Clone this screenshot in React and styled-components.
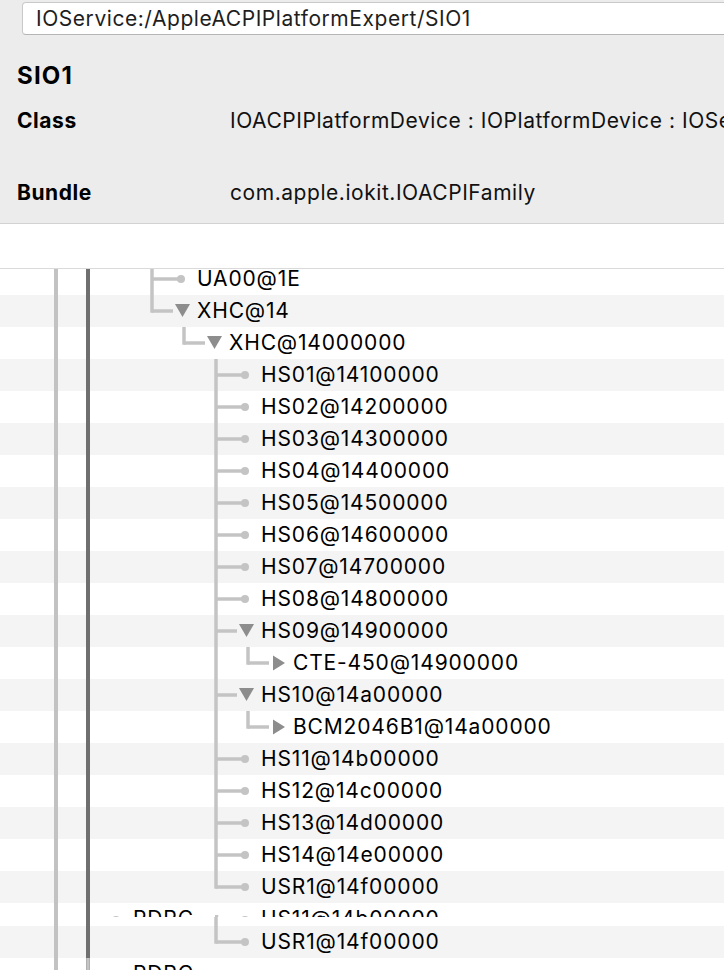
import React from "react";
import styled, { createGlobalStyle } from "styled-components";

const GlobalStyle = createGlobalStyle`
  html, body {
    margin: 0;
    padding: 0;
    background: #fff;
  }
  body {
    font-family: Inter, "Liberation Sans", sans-serif;
    color: #000;
  }
  #root {
    width: 724px;
    height: 970px;
    overflow: hidden;
  }
`;

const RAIL_LIGHT = "#c2c2c2";
const RAIL_DARK = "#6f6f6f";
const LINE = "#c4c4c4";
const ARROW = "#8d8d8d";
const ROW_H = 32;

const colX = (level) => 152 + level * 32;

const rows = [
  { name: "UA00@1E", level: 0, kind: "leaf" },
  { name: "XHC@14", level: 0, kind: "open", last: true },
  { name: "XHC@14000000", level: 1, kind: "open", last: true },
  { name: "HS01@14100000", level: 2, kind: "leaf" },
  { name: "HS02@14200000", level: 2, kind: "leaf" },
  { name: "HS03@14300000", level: 2, kind: "leaf" },
  { name: "HS04@14400000", level: 2, kind: "leaf" },
  { name: "HS05@14500000", level: 2, kind: "leaf" },
  { name: "HS06@14600000", level: 2, kind: "leaf" },
  { name: "HS07@14700000", level: 2, kind: "leaf" },
  { name: "HS08@14800000", level: 2, kind: "leaf" },
  { name: "HS09@14900000", level: 2, kind: "open" },
  { name: "CTE-450@14900000", level: 3, kind: "closed", last: true, through: [2] },
  { name: "HS10@14a00000", level: 2, kind: "open" },
  { name: "BCM2046B1@14a00000", level: 3, kind: "closed", last: true, through: [2] },
  { name: "HS11@14b00000", level: 2, kind: "leaf" },
  { name: "HS12@14c00000", level: 2, kind: "leaf" },
  { name: "HS13@14d00000", level: 2, kind: "leaf" },
  { name: "HS14@14e00000", level: 2, kind: "leaf" },
  { name: "USR1@14f00000", level: 2, kind: "leaf", last: true },
];

const Page = styled.div`
  width: 724px;
`;

const Inspector = styled.div`
  background: #ececec;
  height: 224px;
  box-sizing: border-box;
  border-bottom: 1px solid #d2d2d2;
  padding-top: 2px;
`;

const PathField = styled.div`
  margin-left: 22px;
  width: 740px;
  height: 33px;
  box-sizing: border-box;
  background: #fff;
  border: 1px solid #c9c9c9;
  border-bottom-color: #b5b5b5;
  border-radius: 4px;
  padding-left: 13px;
  font-size: 21px;
  letter-spacing: 0.55px;
  line-height: 31px;
  color: #1e1e1e;
  white-space: nowrap;
`;

const Title = styled.div`
  margin: 26px 0 0 17px;
  font-size: 24px;
  letter-spacing: 1.2px;
  font-weight: 700;
  line-height: 30px;
`;

const PropRow = styled.div`
  display: grid;
  grid-template-columns: 213px 1fr;
  margin: ${(p) => p.$top}px 0 0 17px;
  font-size: 21px;
  letter-spacing: 0.55px;
  line-height: 30px;
  white-space: nowrap;
  overflow: hidden;
`;

const PropName = styled.span`
  font-weight: 700;
`;

const PropValue = styled.span`
  color: #111;
`;

const Spacer = styled.div`
  height: 45px;
  box-sizing: border-box;
  border-bottom: 1px solid #dadada;
`;

const Tree = styled.div`
  height: 701px;
  overflow: hidden;
`;

const Row = styled.div`
  display: flex;
  align-items: center;
  height: ${ROW_H}px;
  background: ${(p) => (p.$shade ? "#f4f4f4" : "#fff")};
  overflow: hidden;
  &:first-child {
    margin-top: -6px;
  }
`;

const Clip = styled.div`
  display: flex;
  align-items: flex-start;
  height: ${(p) => p.$h}px;
  background: #fff;
  overflow: hidden;
`;

const Label = styled.span`
  font-size: 21px;
  letter-spacing: 0.85px;
  line-height: ${ROW_H}px;
  white-space: nowrap;
  width: ${(p) => (p.$w ? `${p.$w}px` : "auto")};
  flex: none;
`;

const Svg = styled.svg`
  display: block;
  flex: none;
`;

function Rails({ h }) {
  return (
    <>
      <line x1={56} x2={56} y1={0} y2={h} stroke={RAIL_LIGHT} strokeWidth={4} />
      <line x1={88} x2={88} y1={0} y2={h} stroke={RAIL_DARK} strokeWidth={4} />
    </>
  );
}

function Guides({ level, kind, last, through = [] }) {
  const vx = colX(level);
  const w = vx + 45;
  const c = ROW_H / 2;
  return (
    <Svg width={w} height={ROW_H}>
      <Rails h={ROW_H} />
      {through.map((l) => (
        <line key={l} x1={colX(l)} x2={colX(l)} y1={0} y2={ROW_H} stroke={LINE} strokeWidth={3.5} />
      ))}
      <line x1={vx} x2={vx} y1={0} y2={last ? c + 1.75 : ROW_H} stroke={LINE} strokeWidth={3.5} />
      <line x1={vx} x2={kind === "leaf" ? vx + 28 : vx + 21} y1={c} y2={c} stroke={LINE} strokeWidth={3.5} />
      {kind === "leaf" && <circle cx={vx + 29} cy={c} r={4} fill={LINE} />}
      {kind === "open" && (
        <path d={`M${vx + 23} ${c - 7} H${vx + 38} L${vx + 30.5} ${c + 6} Z`} fill={ARROW} />
      )}
      {kind === "closed" && (
        <path d={`M${vx + 25} ${c - 7.5} V${c + 7.5} L${vx + 37} ${c} Z`} fill={ARROW} />
      )}
    </Svg>
  );
}

// a half-drawn row left behind by the scroll, only its top shows
function GhostStrip() {
  const c = ROW_H / 2;
  return (
    <>
      <Clip $h={14}>
        <Svg width={133} height={ROW_H}>
          <Rails h={ROW_H} />
          <circle cx={116} cy={c + 1} r={4} fill={LINE} />
        </Svg>
        <Label $w={82}>PDRC</Label>
        <Svg width={46} height={ROW_H}>
          <line x1={1.5} x2={1.5} y1={12} y2={ROW_H} stroke={LINE} strokeWidth={3.5} />
          <circle cx={30} cy={c + 1} r={4} fill={LINE} />
        </Svg>
        <Label>HS11@14b00000</Label>
      </Clip>
      <Clip $h={9}>
        <Svg width={260} height={9}>
          <Rails h={9} />
          <line x1={216} x2={216} y1={0} y2={9} stroke={LINE} strokeWidth={3.5} />
        </Svg>
      </Clip>
    </>
  );
}

export default function App() {
  return (
    <Page>
      <GlobalStyle />
      <Inspector>
        <PathField>IOService:/AppleACPIPlatformExpert/SIO1</PathField>
        <Title>SIO1</Title>
        <PropRow $top={15}>
          <PropName>Class</PropName>
          <PropValue>IOACPIPlatformDevice : IOPlatformDevice : IOService : IORegistryEntry : OSObject</PropValue>
        </PropRow>
        <PropRow $top={42}>
          <PropName>Bundle</PropName>
          <PropValue>com.apple.iokit.IOACPIFamily</PropValue>
        </PropRow>
      </Inspector>
      <Spacer />
      <Tree>
        {rows.map((r, i) => (
          <Row key={r.name} $shade={i % 2 === 1}>
            <Guides level={r.level} kind={r.kind} last={r.last} through={r.through} />
            <Label>{r.name}</Label>
          </Row>
        ))}
        <GhostStrip />
        <Row $shade>
          <Guides level={2} kind="leaf" last />
          <Label>USR1@14f00000</Label>
        </Row>
        <Row>
          <Guides level={-2} kind="leaf" />
          <Label>PDRC</Label>
        </Row>
      </Tree>
    </Page>
  );
}
